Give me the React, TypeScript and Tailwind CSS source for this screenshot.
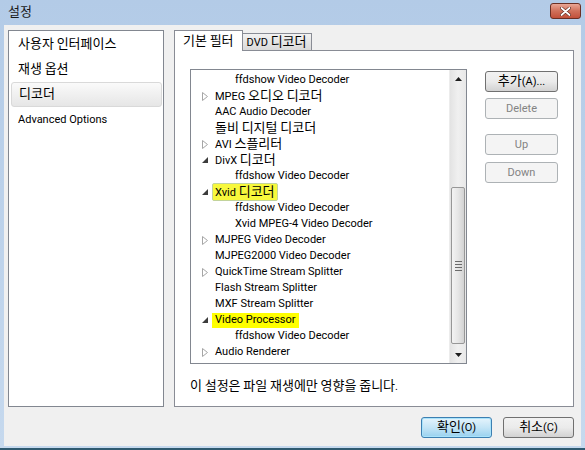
import React from 'react';

type Row = {
  label: string;
  level: 0 | 1;
  arrow?: 'open' | 'closed';
  mark?: 'sel' | 'yellow';
};

const rows: Row[] = [
  { label: 'ffdshow Video Decoder', level: 1 },
  { label: 'MPEG 오디오 디코더', level: 0, arrow: 'closed' },
  { label: 'AAC Audio Decoder', level: 0 },
  { label: '돌비 디지털 디코더', level: 0 },
  { label: 'AVI 스플리터', level: 0, arrow: 'closed' },
  { label: 'DivX 디코더', level: 0, arrow: 'open' },
  { label: 'ffdshow Video Decoder', level: 1 },
  { label: 'Xvid 디코더', level: 0, arrow: 'open', mark: 'sel' },
  { label: 'ffdshow Video Decoder', level: 1 },
  { label: 'Xvid MPEG-4 Video Decoder', level: 1 },
  { label: 'MJPEG Video Decoder', level: 0, arrow: 'closed' },
  { label: 'MJPEG2000 Video Decoder', level: 0 },
  { label: 'QuickTime Stream Splitter', level: 0, arrow: 'closed' },
  { label: 'Flash Stream Splitter', level: 0 },
  { label: 'MXF Stream Splitter', level: 0 },
  { label: 'Video Processor', level: 0, arrow: 'open', mark: 'yellow' },
  { label: 'ffdshow Video Decoder', level: 1 },
  { label: 'Audio Renderer', level: 0, arrow: 'closed' },
];

// Hangul in the original (Malgun Gothic) runs larger than the Latin letters
function T({ text }: { text: string }) {
  const parts = text.split(/([\uAC00-\uD7A3]+)/);
  return (
    <span className="whitespace-pre">
      {parts.map((p, i) =>
        /[\uAC00-\uD7A3]/.test(p) ? (
          <span key={i} className="text-[13px]">
            {p}
          </span>
        ) : (
          p
        )
      )}
    </span>
  );
}

function Arrow({ kind }: { kind?: 'open' | 'closed' }) {
  if (kind === 'closed') {
    return (
      <svg width="6" height="9" viewBox="0 0 6 9">
        <path d="M0.5 0.5 L5.5 4.5 L0.5 8.5 Z" fill="#fff" stroke="#a6a6a6" strokeWidth="1" />
      </svg>
    );
  }
  if (kind === 'open') {
    return (
      <svg width="6" height="6" viewBox="0 0 6 6">
        <path d="M6 0 L6 6 L0 6 Z" fill="#3c3c3c" />
      </svg>
    );
  }
  return null;
}

function TreeRow({ row }: { row: Row }) {
  const label =
    row.mark === 'sel' ? (
      <span className="h-[18px] px-[2px] flex items-center rounded-[2px] border border-[#c2d39c] bg-[#f7f83c]">
        <T text={row.label} />
      </span>
    ) : row.mark === 'yellow' ? (
      <span className="h-[15px] px-[3px] flex items-center bg-[#ffff00]">
        <T text={row.label} />
      </span>
    ) : (
      <span className="px-[3px] flex items-center">
        <T text={row.label} />
      </span>
    );
  return (
    <div className="h-[16px] flex items-center whitespace-nowrap">
      {row.level === 0 ? (
        <div className="w-[21px] pl-[11px] flex items-center">
          <Arrow kind={row.arrow} />
        </div>
      ) : (
        <div className="w-[41px]" />
      )}
      {label}
    </div>
  );
}

function Scrollbar() {
  return (
    <div className="w-[17px] flex flex-col bg-gradient-to-r from-[#e3e3e3] via-[#f0f0f0] to-[#e8e8e8] border-l border-[#ececec]">
      <div className="h-[17px] flex items-center justify-center">
        <svg width="7" height="4" viewBox="0 0 7 4">
          <path d="M3.5 0 L7 4 L0 4 Z" fill="#1e1e1e" />
        </svg>
      </div>
      <div className="flex-1 pt-[100px]">
        <div className="h-[157px] mx-px rounded-[2px] border border-[#979797] bg-gradient-to-r from-[#f3f3f3] via-[#e6e6e6] to-[#d3d3d3] flex flex-col items-center justify-center gap-[2px]">
          <div className="w-[7px] h-px bg-[#6b6b6b]" />
          <div className="w-[7px] h-px bg-[#6b6b6b]" />
          <div className="w-[7px] h-px bg-[#6b6b6b]" />
          <div className="w-[7px] h-px bg-[#6b6b6b]" />
        </div>
      </div>
      <div className="h-[17px] flex items-center justify-center">
        <svg width="7" height="4" viewBox="0 0 7 4">
          <path d="M0 0 L7 0 L3.5 4 Z" fill="#1e1e1e" />
        </svg>
      </div>
    </div>
  );
}

function SideButton({ label, enabled }: { label: string; enabled?: boolean }) {
  return enabled ? (
    <div className="w-[73px] h-[21px] flex items-center justify-center rounded-[3px] border border-[#707070] bg-gradient-to-b from-[#f2f2f2] via-[#ebebeb] to-[#d2d2d2]">
      <T text={label} />
    </div>
  ) : (
    <div className="w-[73px] h-[21px] flex items-center justify-center rounded-[3px] border border-[#adb2b5] bg-[#f4f4f4] text-[#838383]">
      {label}
    </div>
  );
}

export default function App() {
  return (
    <div className="w-[585px] h-[450px] flex flex-col bg-gradient-to-b from-[#b3cbe7] to-[#c6d9ee] border-b-2 border-[#2f5a70] font-['Roboto','Noto_Sans_CJK_KR',sans-serif] text-[11px] leading-[16px] text-black overflow-hidden">
      {/* Title bar */}
      <div className="h-[25px] shrink-0 flex items-center justify-between pl-[8px] pr-[4px]">
        <span className="text-[#1a1a1a]">
          <T text="설정" />
        </span>
        <div className="w-[31px] h-[16px] -mt-[3px] rounded-[3px] border border-[#6b2f24] bg-gradient-to-b from-[#e9a695] via-[#d0705a] to-[#c2503a] flex items-center justify-center">
          <svg width="11" height="9" viewBox="0 0 11 9">
            <path d="M1.5 1 L9.5 8 M9.5 1 L1.5 8" stroke="#5a2418" strokeWidth="3" strokeLinecap="round" />
            <path d="M1.5 1 L9.5 8 M9.5 1 L1.5 8" stroke="#ffffff" strokeWidth="1.8" strokeLinecap="round" />
          </svg>
        </div>
      </div>

      {/* Body */}
      <div className="flex-1 mx-[4px] mb-[2px] bg-[#f0f0f0] flex flex-col">
        <div className="flex pt-[5px] pl-[4px]">
          {/* Category list */}
          <div className="w-[156px] h-[377px] border border-[#828790] bg-white pt-px pl-[2px] pr-px">
            <div className="h-[25px] flex items-center px-[7px]">
              <T text="사용자 인터페이스" />
            </div>
            <div className="h-[25px] flex items-center px-[7px]">
              <T text="재생 옵션" />
            </div>
            <div className="h-[25px] flex items-center px-[7px] rounded-[3px] border border-[#d9d9d9] bg-gradient-to-b from-[#fafafa] to-[#e6e6e6]">
              <T text="디코더" />
            </div>
            <div className="h-[25px] flex items-center px-[7px]">Advanced Options</div>
          </div>

          {/* Tab control */}
          <div className="ml-[10px] w-[400px] flex flex-col">
            <div className="h-[20px] flex items-end">
              <div className="relative z-10 h-[21px] -mb-px px-[8px] flex items-center border border-b-0 border-[#898c95] bg-white">
                <T text="기본 필터" />
              </div>
              <div className="h-[17px] px-[4px] flex items-center border border-l-0 border-b-0 border-[#898c95] bg-gradient-to-b from-[#f2f2f2] to-[#d9d9d9]">
                <T text="DVD 디코더" />
              </div>
            </div>
            <div className="h-[357px] border border-[#898c95] bg-white pt-[18px] pl-[15px]">
              <div className="flex">
                <div className="w-[277px] h-[295px] border border-[#828790] flex bg-white">
                  <div className="flex-1 pt-[2px] overflow-hidden">
                    {rows.map((r, i) => (
                      <TreeRow key={i} row={r} />
                    ))}
                  </div>
                  <Scrollbar />
                </div>
                <div className="ml-[18px] pt-[2px] flex flex-col">
                  <SideButton label="추가(A)..." enabled />
                  <div className="mt-[6px]">
                    <SideButton label="Delete" />
                  </div>
                  <div className="mt-[15px]">
                    <SideButton label="Up" />
                  </div>
                  <div className="mt-[7px]">
                    <SideButton label="Down" />
                  </div>
                </div>
              </div>
              <div className="mt-[14px]">
                <T text="이 설정은 파일 재생에만 영향을 줍니다." />
              </div>
            </div>
          </div>
        </div>

        {/* Dialog buttons */}
        <div className="flex justify-end gap-[11px] pr-[7px] mt-[10px]">
          <div className="w-[71px] h-[21px] flex items-center justify-center rounded-[3px] border border-[#3c7fb1] bg-gradient-to-b from-[#e5f4fc] via-[#c4e5f6] to-[#98d1ef] shadow-[inset_0_0_0_1px_#a9e3fb]">
            <T text="확인(O)" />
          </div>
          <div className="w-[71px] h-[21px] flex items-center justify-center rounded-[3px] border border-[#707070] bg-gradient-to-b from-[#f2f2f2] via-[#ebebeb] to-[#d2d2d2]">
            <T text="취소(C)" />
          </div>
        </div>
      </div>
    </div>
  );
}
